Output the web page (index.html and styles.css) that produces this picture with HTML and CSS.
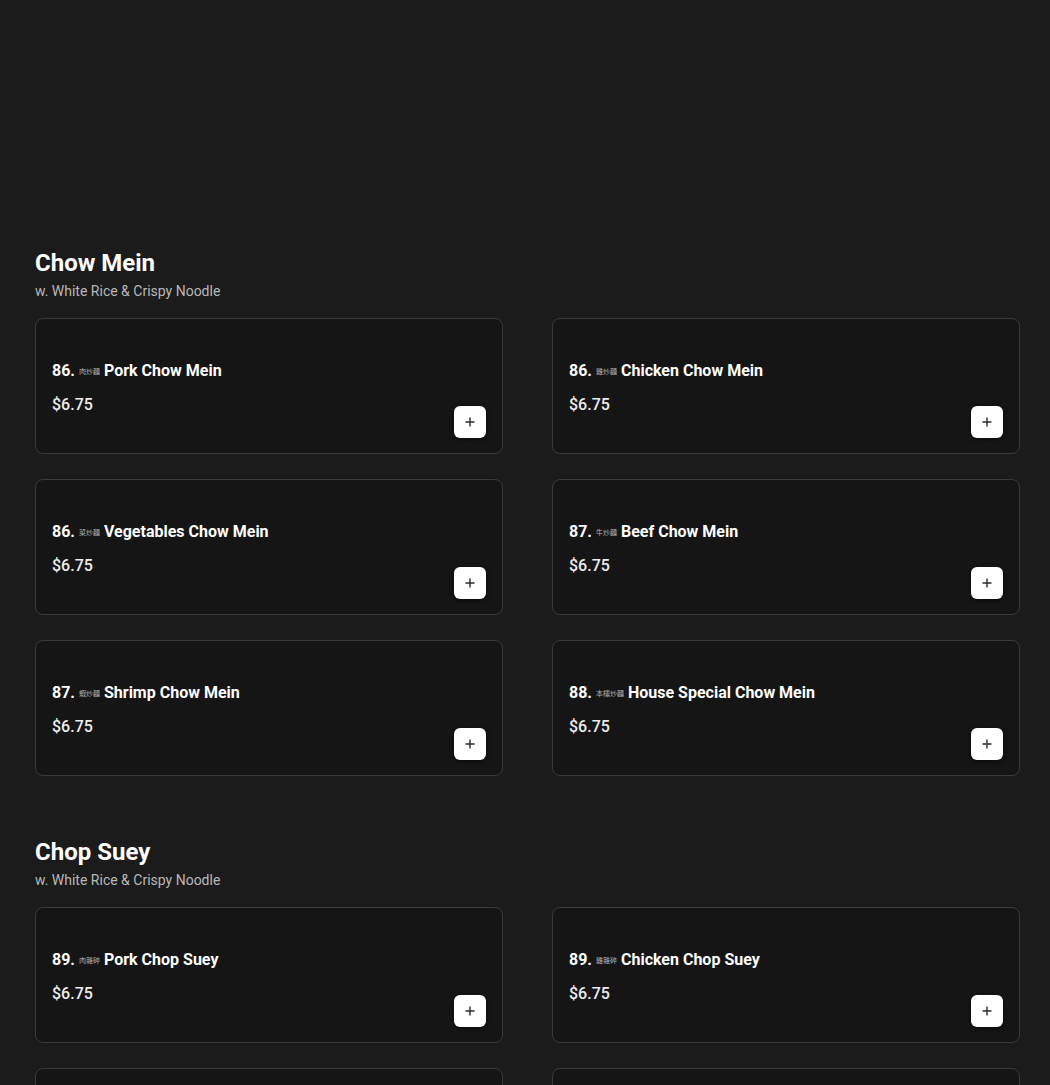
FILE: index.html
```html
<!DOCTYPE html>
<html lang="en">
<head>
<meta charset="utf-8">
<title>Menu</title>
<link rel="stylesheet" href="styles.css">
</head>
<body>
<main class="menu">
  <section class="category">
    <h2 class="cat-title">Chow Mein</h2>
    <p class="cat-sub">w. White Rice &amp; Crispy Noodle</p>
    <div class="grid">
      <div class="card"><div class="info"><div class="name">86. <span class="zh">肉炒麵</span> Pork Chow Mein</div><div class="price">$6.75</div></div><button class="add" aria-label="Add"><svg viewBox="0 0 12 12" width="12" height="12"><path d="M6 1.5v9M1.5 6h9" stroke="#2b2b2b" stroke-width="1.4" fill="none"/></svg></button></div>
      <div class="card"><div class="info"><div class="name">86. <span class="zh">雞炒麵</span> Chicken Chow Mein</div><div class="price">$6.75</div></div><button class="add" aria-label="Add"><svg viewBox="0 0 12 12" width="12" height="12"><path d="M6 1.5v9M1.5 6h9" stroke="#2b2b2b" stroke-width="1.4" fill="none"/></svg></button></div>
      <div class="card"><div class="info"><div class="name">86. <span class="zh">菜炒麵</span> Vegetables Chow Mein</div><div class="price">$6.75</div></div><button class="add" aria-label="Add"><svg viewBox="0 0 12 12" width="12" height="12"><path d="M6 1.5v9M1.5 6h9" stroke="#2b2b2b" stroke-width="1.4" fill="none"/></svg></button></div>
      <div class="card"><div class="info"><div class="name">87. <span class="zh">牛炒麵</span> Beef Chow Mein</div><div class="price">$6.75</div></div><button class="add" aria-label="Add"><svg viewBox="0 0 12 12" width="12" height="12"><path d="M6 1.5v9M1.5 6h9" stroke="#2b2b2b" stroke-width="1.4" fill="none"/></svg></button></div>
      <div class="card"><div class="info"><div class="name">87. <span class="zh">蝦炒麵</span> Shrimp Chow Mein</div><div class="price">$6.75</div></div><button class="add" aria-label="Add"><svg viewBox="0 0 12 12" width="12" height="12"><path d="M6 1.5v9M1.5 6h9" stroke="#2b2b2b" stroke-width="1.4" fill="none"/></svg></button></div>
      <div class="card"><div class="info"><div class="name">88. <span class="zh">本樓炒麵</span> House Special Chow Mein</div><div class="price">$6.75</div></div><button class="add" aria-label="Add"><svg viewBox="0 0 12 12" width="12" height="12"><path d="M6 1.5v9M1.5 6h9" stroke="#2b2b2b" stroke-width="1.4" fill="none"/></svg></button></div>
    </div>
  </section>
  <section class="category">
    <h2 class="cat-title">Chop Suey</h2>
    <p class="cat-sub">w. White Rice &amp; Crispy Noodle</p>
    <div class="grid">
      <div class="card"><div class="info"><div class="name">89. <span class="zh">肉雜碎</span> Pork Chop Suey</div><div class="price">$6.75</div></div><button class="add" aria-label="Add"><svg viewBox="0 0 12 12" width="12" height="12"><path d="M6 1.5v9M1.5 6h9" stroke="#2b2b2b" stroke-width="1.4" fill="none"/></svg></button></div>
      <div class="card"><div class="info"><div class="name">89. <span class="zh">雞雜碎</span> Chicken Chop Suey</div><div class="price">$6.75</div></div><button class="add" aria-label="Add"><svg viewBox="0 0 12 12" width="12" height="12"><path d="M6 1.5v9M1.5 6h9" stroke="#2b2b2b" stroke-width="1.4" fill="none"/></svg></button></div>
      <div class="card"><div class="info"><div class="name">90. <span class="zh">牛雜碎</span> Beef Chop Suey</div><div class="price">$6.75</div></div><button class="add" aria-label="Add"><svg viewBox="0 0 12 12" width="12" height="12"><path d="M6 1.5v9M1.5 6h9" stroke="#2b2b2b" stroke-width="1.4" fill="none"/></svg></button></div>
      <div class="card"><div class="info"><div class="name">90. <span class="zh">蝦雜碎</span> Shrimp Chop Suey</div><div class="price">$6.75</div></div><button class="add" aria-label="Add"><svg viewBox="0 0 12 12" width="12" height="12"><path d="M6 1.5v9M1.5 6h9" stroke="#2b2b2b" stroke-width="1.4" fill="none"/></svg></button></div>
    </div>
  </section>
</main>
</body>
</html>
```
FILE: styles.css
```css
html, body {
  margin: 0;
  padding: 0;
  background: #1b1b1b;
}
body {
  font-family: Roboto, "Noto Sans CJK TC", sans-serif;
  color: #ffffff;
}
.menu {
  width: 985px;
  margin-left: 35px;
  padding-top: 247px;
}
.category {
  margin-bottom: 60px;
}
.cat-title {
  margin: 0;
  font-size: 24px;
  line-height: 32px;
  font-weight: 700;
  color: #ffffff;
}
.cat-sub {
  margin: 2px 0 0;
  font-size: 14px;
  line-height: 20px;
  color: #b8b8b8;
}
.grid {
  margin-top: 17px;
  display: grid;
  grid-template-columns: 468px 468px;
  column-gap: 49px;
  row-gap: 25px;
}
.card {
  position: relative;
  box-sizing: border-box;
  height: 136px;
  background: #151515;
  border: 1px solid #3a3a3a;
  border-radius: 8px;
  padding: 0 16px;
  display: flex;
  flex-direction: column;
  justify-content: center;
}
.info {
  display: flex;
  flex-direction: column;
  gap: 10px;
  padding-top: 4px;
}
.name {
  font-size: 16px;
  line-height: 24px;
  font-weight: 700;
  color: #ffffff;
}
.zh {
  font-family: "Noto Sans CJK TC", sans-serif;
  font-size: 7px;
  font-weight: 400;
  color: #b4b4b4;
  vertical-align: 2px;
}
.price {
  font-size: 16px;
  line-height: 24px;
  font-weight: 500;
  color: #ececec;
}
.add {
  position: absolute;
  right: 16px;
  bottom: 15px;
  width: 32px;
  height: 32px;
  padding: 0;
  border: none;
  border-radius: 6px;
  background: #ffffff;
  box-shadow: 0 1px 4px rgba(0, 0, 0, 0.6);
  display: flex;
  align-items: center;
  justify-content: center;
  cursor: pointer;
}
.add svg {
  display: block;
}
```
